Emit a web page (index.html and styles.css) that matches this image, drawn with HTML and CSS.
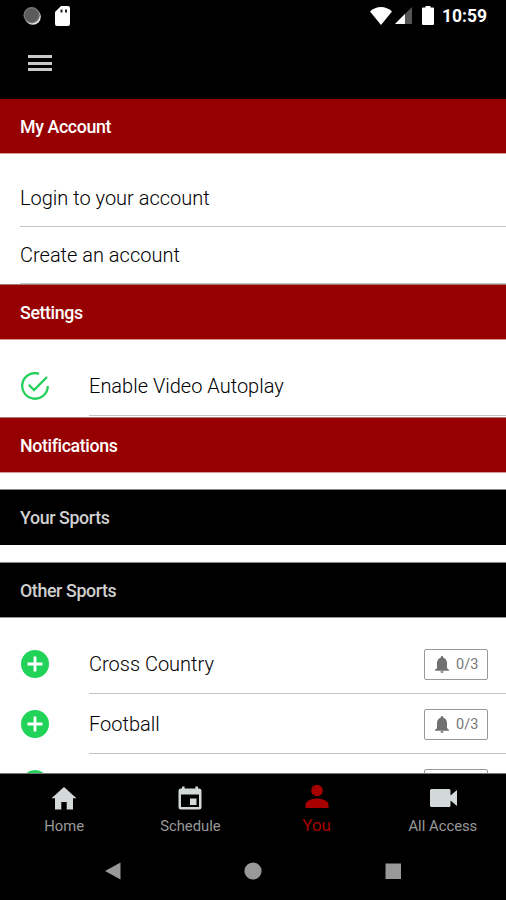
FILE: index.html
```html
<!DOCTYPE html>
<html lang="en">
<head>
  <meta charset="UTF-8" />
  <meta name="viewport" content="width=device-width, initial-scale=1.0"/>
  <title>My Account</title>
  <link rel="stylesheet" href="styles.css">
</head>
<body>
  <div class="screen">
    <!-- Status bar -->
    <div class="status-bar">
      <svg class="status-sync" width="18" height="18" viewBox="0 0 18 18">
        <circle cx="9.8" cy="9.8" r="8" fill="#e8e8e8"/>
        <circle cx="8.7" cy="8.200" r="8.200" fill="#777"/>
        <circle cx="8.7" cy="8.200" r="6.800" fill="#5c5c5c"/>
      </svg>
      <svg class="status-card" width="15" height="20" viewBox="0 0 15 20">
        <path d="M6 0h7a2 2 0 0 1 2 2v16a2 2 0 0 1-2 2H2a2 2 0 0 1-2-2V6z" fill="#fff"/>
        <path d="M5.500 3.500h2v3h-2zM10 3.500h2v3h-2z" fill="#222"/>
      </svg>
      <div class="status-right">
        <svg width="22" height="18" viewBox="0 0 22 18">
          <path d="M0 4.600C3 1.600 7 0 11 0s8 1.600 11 4.600L11 18z" fill="#fff"/>
        </svg>
        <svg class="status-signal" width="17" height="17" viewBox="0 0 18 18">
          <path d="M18 0v18H0z" fill="#555"/>
          <path d="M10.500 7.500V18H0z" fill="#fff"/>
        </svg>
        <svg class="status-battery" width="12" height="20" viewBox="0 0 12 20">
          <path d="M3.500 0h5v1.500H11a1 1 0 0 1 1 1V18a1 1 0 0 1-1 1H1a1 1 0 0 1-1-1V2.500a1 1 0 0 1 1-1h2.500z" fill="#fff"/>
        </svg>
        <span class="clock">10:59</span>
      </div>
    </div>

    <!-- Top bar -->
    <div class="top-bar">
      <div class="menu-icon"><span></span><span></span><span></span></div>
    </div>

    <div class="content">
      <h2 class="section-title">My Account</h2>
      <ul class="account-list">
        <li>Login to your account</li>
        <li>Create an account</li>
      </ul>

      <h2 class="section-title edged">Settings</h2>
      <ul class="option-list settings">
        <li>
          <svg width="28" height="28" viewBox="0 0 28 28" fill="none" stroke="#22cf58" stroke-width="2.300">
            <path d="M18 1.800A12.800 12.800 0 1 0 26.800 14"/>
            <path d="M7.800 12.800l5.200 5.200L26 5"/>
          </svg>
          <div class="option-body">Enable Video Autoplay</div>
        </li>
      </ul>

      <h2 class="section-title edged">Notifications</h2>
      <h3 class="sub-title">Your Sports</h3>
      <h3 class="sub-title other">Other Sports</h3>

      <ul class="option-list">
        <li>
          <svg width="28" height="28" viewBox="0 0 28 28">
            <circle cx="14" cy="14" r="14" fill="#22d35a"/>
            <path d="M14 6.500v15M6.500 14h15" stroke="#fff" stroke-width="2.800"/>
          </svg>
          <div class="option-body">
            Cross Country
            <span class="alerts">
              <svg width="14" height="17" viewBox="0 0 14 17"><path d="M7 0a1.300 1.300 0 0 1 1.300 1.300v.5C10.800 2.400 12 4.500 12 7v5l2 2v.7H0V14l2-2V7c0-2.500 1.200-4.600 3.700-5.200v-.5A1.300 1.300 0 0 1 7 0zM5.400 15.300h3.200a1.600 1.600 0 0 1-3.200 0z" fill="#707070"/></svg>
              0/3
            </span>
          </div>
        </li>
        <li>
          <svg width="28" height="28" viewBox="0 0 28 28">
            <circle cx="14" cy="14" r="14" fill="#22d35a"/>
            <path d="M14 6.500v15M6.500 14h15" stroke="#fff" stroke-width="2.800"/>
          </svg>
          <div class="option-body">
            Football
            <span class="alerts">
              <svg width="14" height="17" viewBox="0 0 14 17"><path d="M7 0a1.300 1.300 0 0 1 1.300 1.300v.5C10.800 2.400 12 4.500 12 7v5l2 2v.7H0V14l2-2V7c0-2.500 1.200-4.600 3.700-5.200v-.5A1.300 1.300 0 0 1 7 0zM5.400 15.300h3.200a1.600 1.600 0 0 1-3.200 0z" fill="#707070"/></svg>
              0/3
            </span>
          </div>
        </li>
        <li>
          <svg width="28" height="28" viewBox="0 0 28 28">
            <circle cx="14" cy="14" r="14" fill="#22d35a"/>
          </svg>
          <div class="option-body">
            <span class="alerts"></span>
          </div>
        </li>
      </ul>
    </div>

    <!-- Tabs -->
    <div class="tab-bar">
      <div class="tab">
        <svg width="26" height="26" viewBox="0 0 26 26"><path d="M13 2l12.500 11.300H22V24.500h-6.300v-7.500h-5.400v7.500H4V13.300H.5z" fill="#d3d9d8"/></svg>
        <span>Home</span>
      </div>
      <div class="tab">
        <svg width="26" height="26" viewBox="0 0 26 26"><path fill-rule="evenodd" d="M5 1.500h2.600v2h10.800v-2H21v2h1a2.500 2.500 0 0 1 2.500 2.500v16a2.500 2.500 0 0 1-2.500 2.500H4A2.500 2.500 0 0 1 1.500 22V6A2.500 2.500 0 0 1 4 3.500h1zM4 9.500V22h18V9.500zM13 13.500h6.500V20H13z" fill="#d3d9d8"/></svg>
        <span>Schedule</span>
      </div>
      <div class="tab active">
        <svg width="26" height="26" viewBox="0 0 26 26"><circle cx="13" cy="7.500" r="5.800" fill="#a80000"/><path d="M1.500 25v-3.500c0-4 7.500-6 11.500-6s11.500 2 11.500 6V25z" fill="#a80000"/></svg>
        <span>You</span>
      </div>
      <div class="tab">
        <svg width="28" height="26" viewBox="0 0 28 26"><path d="M2.500 4h17.500A1.500 1.500 0 0 1 21.500 5.500v5L28 5v16L21.500 15.500v5a1.500 1.500 0 0 1-1.500 1.500H2.500A1.500 1.500 0 0 1 1 20.500v-15A1.500 1.500 0 0 1 2.500 4z" fill="#d3d9d8"/></svg>
        <span>All Access</span>
      </div>
    </div>

    <!-- System navigation -->
    <div class="system-bar">
      <svg width="18" height="18" viewBox="0 0 18 18"><path d="M1 9L16.500 .5v17z" fill="#999"/></svg>
      <svg width="18" height="18" viewBox="0 0 18 18"><circle cx="9" cy="9" r="8.600" fill="#999"/></svg>
      <svg width="18" height="18" viewBox="0 0 18 18"><path d="M1.500 1.500h15.500v15.500h-15.500z" fill="#999"/></svg>
    </div>
  </div>
</body>
</html>
```

FILE: styles.css
```css
* {
  box-sizing: border-box;
}

body {
  margin: 0;
  font-family: Roboto, "Liberation Sans", sans-serif;
  background-color: #fff;
}

.screen {
  width: 506px;
  height: 900px;
  display: flex;
  flex-direction: column;
  overflow: hidden;
}

svg {
  display: block;
  flex: none;
}

ul {
  list-style: none;
  margin: 0;
  padding: 16px 0 0;
}

.status-bar {
  height: 32px;
  flex: none;
  display: flex;
  align-items: center;
  padding: 0 19px 1px 23px;
  background-color: #000;
}

.status-card {
  margin-left: 14px;
}

.status-right {
  display: flex;
  align-items: center;
  margin-left: auto;
}

.status-signal {
  margin-left: 3px;
}

.status-battery {
  margin-left: 10px;
}

.clock {
  margin-left: 8px;
  color: #fff;
  font-size: 17.500px;
  font-weight: bold;
  line-height: 20px;
}

.top-bar {
  height: 67px;
  flex: none;
  padding: 23px 28px;
  background-color: #000;
}

.menu-icon {
  width: 24px;
  display: flex;
  flex-direction: column;
  gap: 3.500px;
}

.menu-icon span {
  height: 3px;
  background-color: #c9c9c9;
}

.content {
  flex: 1;
  min-height: 0;
  overflow: hidden;
  border-bottom: 1px solid #777;
}

.section-title,
.sub-title {
  height: 55px;
  margin: 0;
  padding-left: 20px;
  font-size: 17.800px;
  font-weight: 500;
  letter-spacing: -0.380px;
  line-height: 55px;
}

.section-title {
  background-color: #970000;
  border-bottom: 1px solid #d99;
  color: #fff;
}

.edged {
  height: 56px;
  border-top: 1px solid #a77;
}

.sub-title {
  height: 56px;
  margin-top: 16px;
  background-color: #000;
  border-top: 1px solid #888;
  color: #d0d0d0;
}

.sub-title.other {
  margin-top: 17px;
  border-bottom: 1px solid #999;
}

.account-list li {
  height: 57px;
  margin-left: 20px;
  border-bottom: 1px solid #c4c4c4;
  font-size: 20px;
  font-weight: 300;
  line-height: 56px;
  color: #000;
}

.option-list li {
  height: 60px;
  display: flex;
  align-items: center;
  padding-left: 21px;
}

.option-body {
  height: 100%;
  flex: 1;
  display: flex;
  align-items: center;
  margin-left: 40px;
  padding: 1px 18px 0 0;
  border-bottom: 1px solid #c4c4c4;
  font-size: 20px;
  font-weight: 300;
  color: #000;
}

.settings {
  padding-bottom: 1px;
}

.alerts {
  width: 64px;
  height: 31px;
  display: flex;
  align-items: center;
  gap: 7px;
  margin-left: auto;
  padding-left: 10px;
  border: 1px solid #999;
  border-radius: 2px;
  font-size: 14.500px;
  font-weight: 400;
  color: #777;
}

.tab-bar {
  height: 70px;
  flex: none;
  display: grid;
  grid-template-columns: repeat(4, 1fr);
  padding-left: 1px;
  background-color: #000;
}

.tab {
  display: flex;
  flex-direction: column;
  align-items: center;
  padding-top: 11px;
  color: #999;
  font-size: 14.800px;
  line-height: 20px;
}

.tab span {
  margin-top: 5px;
}

.tab.active {
  padding-top: 9px;
  color: #a80000;
  font-size: 17px;
}

.tab.active span {
  margin-top: 6px;
}

.system-bar {
  height: 56px;
  flex: none;
  display: flex;
  align-items: flex-start;
  justify-content: center;
  gap: 122px;
  padding-top: 18px;
  background-color: #000;
}
```
